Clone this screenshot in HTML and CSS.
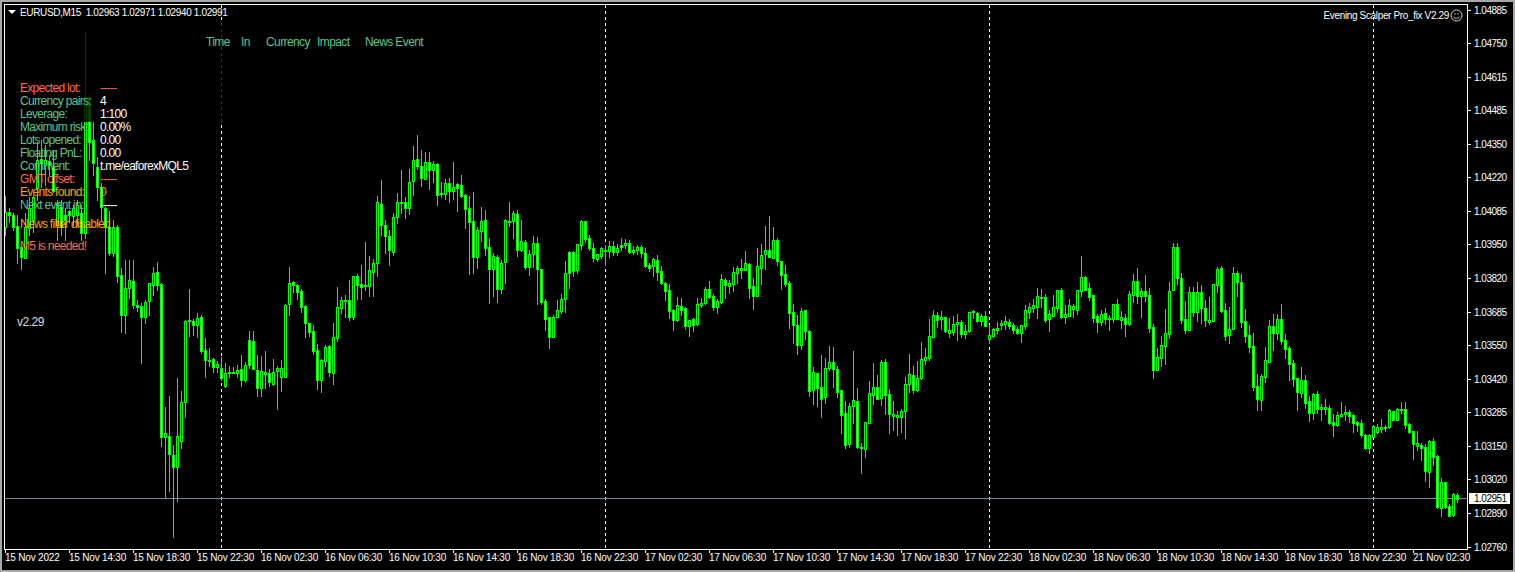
FILE: index.html
```html
<!DOCTYPE html>
<html lang="en">
<head>
<meta charset="utf-8">
<title>EURUSD,M15</title>
<link rel="stylesheet" href="styles.css">
</head>
<body>
<main class="terminal">
  <section class="chart">
    <svg id="plot" class="plot" viewBox="5 5 1462 544" width="1462" height="544" aria-label="EURUSD M15 candlestick chart">
      <path class="separator" d="M221.5 5V549M605.5 5V549M989.5 5V549M1373.5 5V549"/>
      <path class="bid-line" d="M5 498.5H1467"/>
    </svg>
    <div class="dim"></div>

    <div class="symbol">
      <i class="menu-arrow"></i>
      <span class="symbol-text">EURUSD,M15  1.02963 1.02971 1.02940 1.02991</span>
    </div>
    <div class="ea-name">
      <span>Evening Scalper Pro_fix V2.29</span>
      <svg class="smiley" viewBox="0 0 13 13" width="13" height="13">
        <circle cx="6.5" cy="6.5" r="5.5"/>
        <path d="M3.4 7.6C4.2 9.8 8.8 9.8 9.6 7.6"/>
        <path class="eye" d="M4.5 4h1v1.6h-1zM7.5 4h1v1.6h-1z"/>
      </svg>
    </div>

    <div class="news-head">
      <span>Time</span><span>In</span><span>Currency</span><span>Impact</span><span>News Event</span>
    </div>

    <div class="info">
      <span class="tomato">Expected lot:</span><span class="tomato">-----</span>
      <span class="sea">Currency pairs:</span><span>4</span>
      <span class="sea">Leverage:</span><span>1:100</span>
      <span class="sea">Maximum risk:</span><span>0.00%</span>
      <span class="sea">Lots opened:</span><span>0.00</span>
      <span class="sea">Floating PnL:</span><span>0.00</span>
      <span class="sea">Comment:</span><span>t.me/eaforexMQL5</span>
      <span class="tomato">GMT offset:</span><span class="tomato">-----</span>
      <span class="orange">Events found:</span><span class="orange">0</span>
      <span class="sea">Next event in:</span><span>-----</span>
    </div>
    <div class="notice orange news-filter">News filter disabled</div>
    <div class="notice tomato needed">M5 is needed!</div>
    <div class="notice version">v2.29</div>
  </section>

  <aside class="price-axis">
    <span>1.04885</span><span>1.04750</span><span>1.04615</span><span>1.04485</span><span>1.04350</span><span>1.04220</span><span>1.04085</span><span>1.03950</span><span>1.03820</span><span>1.03685</span><span>1.03550</span><span>1.03420</span><span>1.03285</span><span>1.03150</span><span>1.03020</span><span>1.02890</span><span>1.02760</span>
    <b class="bid-tag">1.02951</b>
  </aside>

  <footer class="time-axis">
    <span>15 Nov 2022</span><span>15 Nov 14:30</span><span>15 Nov 18:30</span><span>15 Nov 22:30</span><span>16 Nov 02:30</span><span>16 Nov 06:30</span><span>16 Nov 10:30</span><span>16 Nov 14:30</span><span>16 Nov 18:30</span><span>16 Nov 22:30</span><span>17 Nov 02:30</span><span>17 Nov 06:30</span><span>17 Nov 10:30</span><span>17 Nov 14:30</span><span>17 Nov 18:30</span><span>17 Nov 22:30</span><span>18 Nov 02:30</span><span>18 Nov 06:30</span><span>18 Nov 10:30</span><span>18 Nov 14:30</span><span>18 Nov 18:30</span><span>18 Nov 22:30</span><span>21 Nov 02:30</span>
  </footer>
</main>
<script src="chart.js"></script>
</body>
</html>
```

FILE: styles.css
```css
* { box-sizing: border-box; }
html, body { margin: 0; height: 100%; }
body {
  background: #a8a8a8;
  overflow: hidden;
  font-family: "Liberation Sans", Arial, sans-serif;
  color: #fff;
}
.terminal {
  width: 1511px;
  height: 568px;
  margin: 2px;
  padding: 2px 0 0 2px;
  background: #000;
  display: grid;
  grid-template-columns: 1464px 45px;
  grid-template-rows: 546px 20px;
}
.chart {
  position: relative;
  border: 1px solid #fff;
  overflow: hidden;
}
.plot { display: block; }
.separator { stroke: #fff; stroke-width: 1; stroke-dasharray: 3 3; fill: none; shape-rendering: crispEdges; }
.bid-line { stroke: #778899; stroke-width: 1; fill: none; shape-rendering: crispEdges; }
.wick, .body { fill: #00ff00; shape-rendering: crispEdges; }
.core-up { fill: #000; shape-rendering: crispEdges; }
.core-down { fill: #fff; shape-rendering: crispEdges; }

.dim {
  position: absolute;
  left: 11px;
  top: 15px;
  width: 420px;
  height: 102px;
  background: rgba(0, 0, 0, .8);
}

.symbol {
  position: absolute;
  left: 3px;
  top: 0;
  height: 14px;
  display: flex;
  align-items: center;
  gap: 4px;
  font-size: 10px;
  letter-spacing: -.36px;
  white-space: pre;
}
.menu-arrow {
  width: 0;
  height: 0;
  border-left: 4px solid transparent;
  border-right: 4px solid transparent;
  border-top: 4px solid #fff;
}
.ea-name {
  position: absolute;
  right: 4px;
  top: 3px;
  height: 14px;
  display: flex;
  align-items: center;
  gap: 1px;
  font-size: 10px;
  letter-spacing: -.35px;
  white-space: nowrap;
}
.smiley { fill: none; stroke: #d8d8d8; stroke-width: 1; }
.smiley .eye { fill: #d8d8d8; stroke: none; }

.news-head {
  position: absolute;
  left: 201px;
  top: 30px;
  display: grid;
  grid-template-columns: 35px 25px 51px 48px auto;
  font-size: 12px;
  letter-spacing: -.6px;
  line-height: 14px;
  color: #5fc48c;
  white-space: nowrap;
}
.info {
  position: absolute;
  left: 15px;
  top: 77px;
  display: grid;
  grid-template-columns: 80px auto;
  grid-auto-rows: 13px;
  font-size: 12px;
  letter-spacing: -.7px;
  line-height: 13px;
  white-space: nowrap;
}
.notice {
  position: absolute;
  left: 15px;
  font-size: 12px;
  letter-spacing: -.7px;
  line-height: 13px;
  white-space: nowrap;
}
.news-filter { top: 213px; }
.needed { top: 235px; }
.version { top: 311px; left: 12px; color: #dcdcdc; letter-spacing: -.5px; }
.sea { color: #5fc48c; }
.tomato { color: #ff6a50; }
.orange { color: #ffa500; }

.price-axis {
  position: relative;
  height: 549px;
  display: flex;
  flex-direction: column;
  justify-content: space-between;
  font-size: 10px;
  letter-spacing: -.5px;
}
.price-axis span {
  display: flex;
  align-items: center;
  gap: 3px;
  height: 12px;
}
.price-axis span::before {
  content: "";
  width: 3px;
  height: 1px;
  background: #fff;
}
.bid-tag {
  position: absolute;
  left: 1px;
  top: 489px;
  width: 41px;
  height: 11px;
  padding-left: 5px;
  line-height: 11px;
  background: #fff;
  color: #000;
  font-weight: 400;
}

.time-axis {
  grid-column: 1 / -1;
  display: flex;
  padding-left: 1px;
  font-size: 10px;
  letter-spacing: -.2px;
  white-space: nowrap;
}
.time-axis span {
  flex: 0 0 64px;
  height: 20px;
  position: relative;
  padding-top: 2px;
  line-height: 12px;
}
.time-axis span::before {
  content: "";
  position: absolute;
  left: 0;
  top: 0;
  width: 1px;
  height: 3px;
  background: #fff;
}
```

FILE: chart.js
```js
// [x, high, bodyTop, bodyBottom, low, bearish]
const CANDLES = [
[5,196,212,227,235,0],[9,208,212,215,222,1],[13,213,215,227,230,1],[17,215,226,248,263,1],[21,245,247,257,269,1],[25,213,227,258,258,0],[29,197,208,228,235,0],[33,195,197,220,232,0],[37,142,160,188,200,0],[41,140,159,163,187,1],[45,145,160,165,185,0],[49,155,161,165,175,1],[53,150,167,191,192,1],[57,200,203,225,240,0],[61,200,207,227,235,1],[65,208,215,220,240,1],[69,210,211,215,222,1],[73,205,208,216,225,0],[77,200,205,215,225,0],[81,205,213,233,240,1],
[85,32,97,233,238,0],[89,95,97,142,160,1],[93,122,140,163,175,1],[97,157,167,187,200,1],[101,183,187,207,220,1],[105,207,208,227,273,1],[109,211,227,253,255,1],[113,220,227,253,256,0],[117,225,227,276,282,1],[121,268,275,315,332,1],[125,260,288,315,333,0],[129,260,280,288,298,0],[133,260,281,305,308,1],[137,300,305,307,311,1],[141,303,306,317,363,1],[145,300,302,317,323,0],[149,283,283,301,315,0],[153,267,273,285,295,0],[157,262,272,285,290,1],[161,283,284,437,446,1],
[165,407,433,437,498,0],[169,396,436,454,491,1],[173,445,455,467,537,1],[177,378,436,467,501,0],[181,391,402,441,448,0],[185,320,321,402,417,0],[189,289,320,321,336,0],[193,319,321,325,335,1],[197,313,318,325,337,0],[201,315,317,351,353,1],[205,338,350,360,377,1],[209,348,360,361,366,0],[213,358,359,367,372,1],[217,361,364,367,372,0],[221,357,368,378,380,1],[225,363,373,386,387,0],[229,366,372,373,377,0],[233,367,372,373,373,0],[237,365,370,373,377,0],[241,355,369,380,386,1],
[245,362,365,380,382,0],[249,331,340,365,368,1],[253,331,341,369,369,1],[257,355,370,388,396,1],[261,356,371,388,396,0],[265,351,372,374,388,0],[269,369,373,382,386,1],[273,359,372,384,385,0],[277,366,368,371,409,0],[281,360,368,377,391,0],[285,304,305,377,377,0],[289,267,283,304,315,0],[293,281,282,285,292,1],[297,284,285,292,299,1],[301,289,291,307,312,1],[305,305,306,323,337,1],[309,323,323,332,336,1],[313,325,331,351,354,1],[317,344,350,380,389,1],[321,359,360,380,392,0],
[325,345,347,361,366,0],[329,345,346,372,376,1],[333,323,337,373,384,0],[337,287,307,338,341,0],[341,297,300,308,313,0],[345,295,300,301,317,0],[349,280,300,317,320,1],[353,276,276,317,319,0],[357,274,276,285,299,1],[361,265,284,287,299,1],[365,242,285,286,290,0],[369,256,270,286,296,0],[373,259,263,272,296,0],[377,196,202,263,276,0],[381,180,204,225,235,1],[385,220,225,236,253,1],[389,230,236,250,265,1],[393,213,217,252,255,0],[397,193,202,217,223,0],[401,170,202,203,213,0],
[405,197,202,208,218,1],[409,169,182,208,214,0],[413,146,160,181,195,0],[417,135,159,166,169,1],[421,150,166,178,186,1],[425,152,162,179,179,0],[429,152,162,170,189,1],[433,161,164,170,182,0],[437,163,164,195,205,1],[441,182,193,194,197,0],[445,179,183,194,199,0],[449,178,183,191,202,1],[453,162,187,191,199,0],[457,183,184,188,211,1],[461,175,185,196,197,1],[465,194,195,209,228,1],[469,196,208,222,274,1],[473,192,221,257,273,1],[477,227,230,257,268,0],[481,207,221,231,241,0],
[485,210,220,248,255,1],[489,238,247,269,303,1],[493,253,256,269,296,0],[497,255,257,289,302,1],[501,260,263,289,293,0],[505,219,220,262,283,0],[509,202,221,222,226,0],[513,211,213,221,238,0],[517,210,214,250,256,1],[521,220,241,250,251,0],[525,240,242,267,269,1],[529,250,254,267,275,0],[533,236,243,254,267,0],[537,237,243,269,304,1],[541,269,269,302,304,1],[545,299,301,319,330,1],[549,317,317,337,348,1],[553,315,317,337,337,0],[557,300,310,317,317,0],[561,294,299,311,313,0],
[565,261,273,299,312,0],[569,251,252,273,288,1],[573,251,252,271,276,1],[577,244,244,270,273,0],[581,220,221,245,249,0],[585,221,221,239,242,1],[589,235,238,248,250,1],[593,243,248,258,261,1],[597,254,254,259,261,0],[601,247,248,256,258,0],[605,245,250,251,265,0],[609,241,246,251,257,0],[613,241,246,252,255,1],[617,244,248,252,255,0],[621,238,245,247,250,1],[625,239,243,245,248,0],[629,240,243,252,253,1],[633,246,250,252,254,0],[637,245,247,250,254,0],[641,245,247,253,257,1],
[645,248,253,266,267,1],[649,263,265,268,271,1],[653,258,259,266,276,0],[657,255,260,272,280,1],[661,266,271,283,284,1],[665,282,283,291,300,1],[669,284,290,311,318,1],[673,309,310,320,330,1],[677,297,305,320,321,0],[681,298,306,310,315,1],[685,307,308,326,329,1],[689,320,320,326,336,0],[693,318,319,325,331,1],[697,298,304,324,325,0],[701,298,303,305,307,0],[705,287,289,303,304,0],[709,281,289,297,298,1],[713,294,296,307,310,1],[717,299,301,307,313,0],[721,274,279,302,303,0],
[725,278,280,285,298,1],[729,280,283,286,293,0],[733,267,272,284,291,0],[737,266,268,273,283,0],[741,259,268,270,278,0],[745,251,263,270,270,0],[749,263,264,288,298,1],[753,278,286,296,309,1],[757,248,266,296,296,0],[761,244,255,268,284,0],[765,226,250,254,269,0],[769,216,250,257,257,1],[773,227,240,258,258,0],[777,238,240,261,265,1],[781,261,261,275,289,1],[785,265,274,284,286,1],[789,281,283,313,328,1],[793,304,312,325,343,1],[797,315,325,345,354,1],[801,308,311,345,349,0],
[805,310,310,331,339,1],[809,330,331,391,396,1],[813,367,372,390,404,0],[817,373,373,388,406,1],[821,355,387,399,417,1],[825,358,368,397,403,0],[829,346,362,368,370,0],[833,347,362,369,387,1],[837,366,369,392,397,1],[841,390,390,415,433,1],[845,401,413,445,448,1],[849,403,406,444,447,0],[853,351,400,406,423,0],[857,388,401,447,448,1],[861,443,447,448,473,0],[865,422,422,449,457,0],[869,381,393,423,423,0],[873,363,387,395,404,0],[877,375,387,399,399,1],[881,360,362,398,405,0],
[885,359,362,395,414,1],[889,389,394,414,433,1],[893,401,414,416,430,0],[897,411,415,417,435,0],[901,409,411,417,432,0],[905,377,384,411,438,0],[909,354,374,384,392,0],[913,366,375,390,393,1],[917,361,378,390,391,0],[921,342,359,378,379,0],[925,348,357,360,364,0],[929,319,336,358,360,0],[933,310,315,337,337,0],[937,312,315,320,327,1],[941,311,317,319,329,0],[945,317,317,331,332,1],[949,318,330,333,337,0],[953,316,324,332,335,0],[957,314,322,324,340,0],[961,320,322,334,337,1],
[965,325,331,334,338,0],[969,312,312,331,332,0],[973,310,311,312,318,0],[977,312,313,321,322,1],[981,314,316,321,325,0],[985,311,316,326,326,1],[989,325,335,339,343,0],[993,328,329,336,337,0],[997,322,328,330,333,0],[1001,320,323,325,329,0],[1005,316,321,324,329,0],[1009,319,322,326,328,1],[1013,323,325,330,333,1],[1017,327,329,333,334,1],[1021,325,325,333,342,0],[1025,305,310,326,329,0],[1029,303,307,312,318,0],[1033,299,305,308,312,0],[1037,288,296,307,318,0],[1041,289,297,298,307,0],
[1045,294,297,320,322,1],[1049,310,314,319,331,0],[1053,295,307,316,316,0],[1057,290,290,308,312,0],[1061,288,290,317,318,1],[1065,305,314,317,323,0],[1069,299,305,316,316,0],[1073,304,306,309,317,0],[1077,290,290,310,314,0],[1081,256,277,291,296,0],[1085,276,277,290,290,1],[1089,283,288,297,300,1],[1093,295,295,318,322,1],[1097,314,316,322,332,1],[1101,310,314,322,325,0],[1105,308,313,319,324,1],[1109,315,318,319,330,0],[1113,304,304,319,322,0],[1117,299,304,319,319,1],[1121,311,317,320,328,0],
[1125,314,318,324,336,1],[1129,291,294,324,325,0],[1133,274,281,295,302,0],[1137,268,281,296,303,1],[1141,288,291,296,317,0],[1145,275,291,296,301,1],[1149,288,295,328,332,1],[1153,324,327,370,378,1],[1157,348,357,370,370,0],[1161,336,345,358,366,0],[1165,309,333,346,364,0],[1169,282,291,334,338,0],[1173,243,247,290,290,0],[1177,243,247,278,284,1],[1181,273,278,320,323,1],[1185,301,319,330,333,1],[1189,287,292,330,330,0],[1193,287,292,312,316,1],[1197,282,292,312,321,0],[1201,285,292,308,323,1],
[1205,300,308,320,326,1],[1209,297,320,322,324,0],[1213,284,284,321,321,0],[1217,267,269,285,292,0],[1221,266,268,311,312,1],[1225,303,310,336,340,1],[1229,307,329,335,343,0],[1233,267,273,329,329,0],[1237,271,273,282,296,1],[1241,274,282,322,327,1],[1245,309,321,336,342,1],[1249,325,335,347,352,1],[1253,333,346,387,390,1],[1257,374,386,399,410,1],[1261,374,376,400,410,0],[1265,347,360,377,382,0],[1269,320,326,362,362,0],[1273,314,326,333,350,1],[1277,314,319,333,339,0],[1281,304,319,341,344,1],
[1285,334,340,349,358,1],[1289,346,348,364,380,1],[1293,360,363,379,386,1],[1297,378,378,392,410,1],[1301,367,380,393,397,0],[1305,375,380,403,408,1],[1309,396,401,413,421,1],[1313,393,394,413,419,0],[1317,391,394,409,413,1],[1321,404,407,409,420,0],[1325,399,407,409,414,0],[1329,405,408,423,424,1],[1333,414,422,425,436,1],[1337,412,415,425,426,0],[1341,402,414,416,416,0],[1345,406,412,414,420,0],[1349,410,412,416,422,1],[1353,414,415,423,432,1],[1357,421,422,425,431,1],[1361,420,423,435,437,1],
[1365,434,435,448,449,1],[1369,434,435,448,453,0],[1373,425,426,437,437,0],[1377,424,427,432,433,0],[1381,419,427,429,432,0],[1385,425,427,428,431,0],[1389,409,410,427,428,0],[1393,411,411,420,420,1],[1397,408,409,420,420,0],[1401,402,409,410,413,0],[1405,402,409,425,428,1],[1409,423,424,432,433,1],[1413,431,431,444,459,1],[1417,431,443,446,450,0],[1421,443,445,448,460,1],[1425,444,447,471,481,1],[1429,440,441,472,487,0],[1433,438,441,457,465,1],[1437,455,456,507,508,1],[1441,478,482,508,516,0],
[1445,482,482,507,508,1],[1449,504,506,516,516,1],[1453,493,494,515,516,0],[1457,493,495,499,502,1]
];

const NS = "http://www.w3.org/2000/svg";
const plot = document.getElementById("plot");

function addRect(cls, x, y, w, h) {
  if (h <= 0) return;
  const r = document.createElementNS(NS, "rect");
  r.setAttribute("class", cls);
  r.setAttribute("x", x);
  r.setAttribute("y", y);
  r.setAttribute("width", w);
  r.setAttribute("height", h);
  plot.appendChild(r);
}

for (const [x, high, top, bottom, low, bearish] of CANDLES) {
  addRect("wick", x, high, 1, low - high + 1);
  addRect("body", x - 1, top, 3, bottom - top + 1);
  addRect(bearish ? "core-down" : "core-up", x, top + 1, 1, bottom - top - 1);
}
```
